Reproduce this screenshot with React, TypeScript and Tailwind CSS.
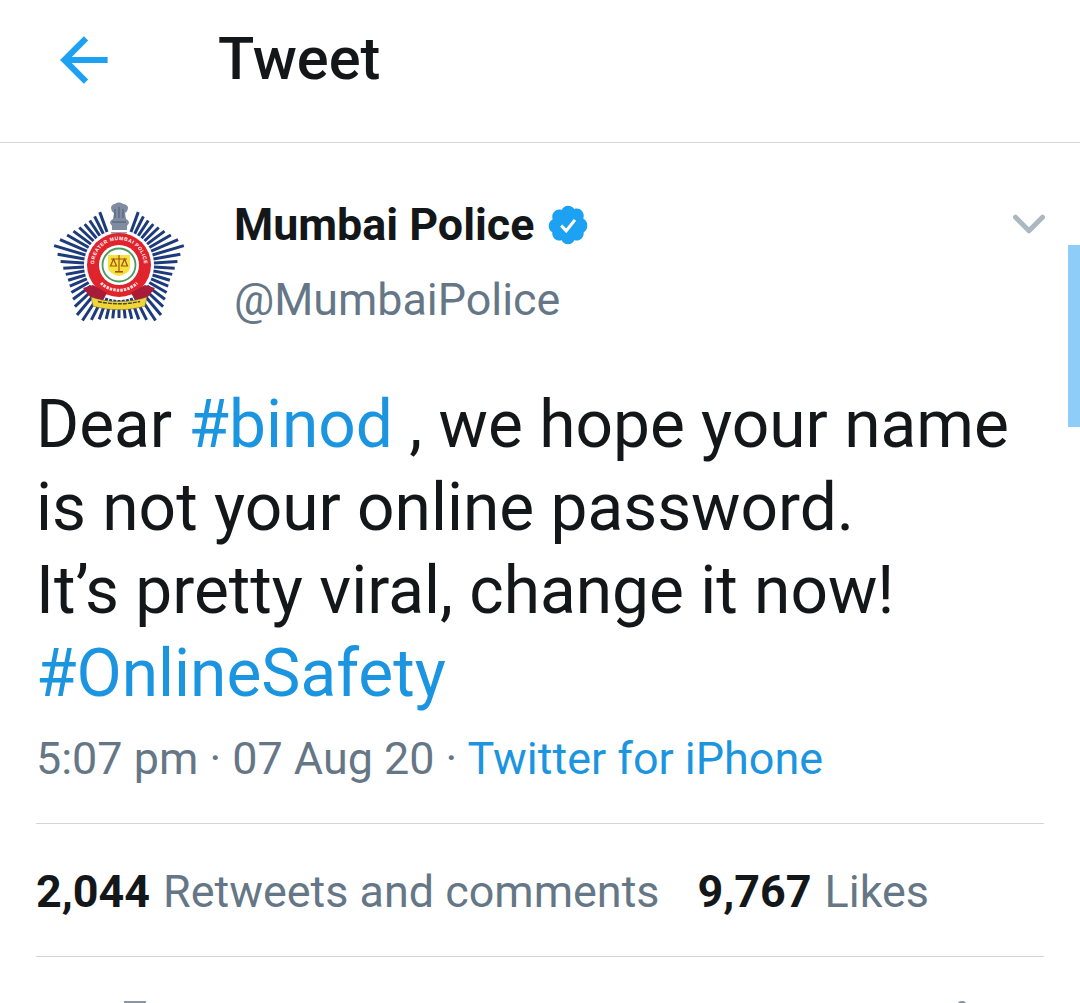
import { ArrowLeft, ChevronDown } from 'lucide-react';

// star outline of the badge, in polar form around the centre
const TIP = 69;
const VALLEY = 53;
const STEP = (2 * Math.PI) / 5;

function rayEnd(angle: number) {
  // angle 0 points straight up, a tip every 72 degrees
  let a = angle % STEP;
  if (a > STEP / 2) a = STEP - a;
  const half = STEP / 2;
  const x2 = VALLEY * Math.cos(half);
  const y2 = VALLEY * Math.sin(half);
  const dx = x2 - TIP;
  const dy = y2;
  return (TIP * dy) / (Math.cos(a) * dy - Math.sin(a) * dx);
}

const rays = Array.from({ length: 54 }, (_, i) => {
  const angle = (i / 54) * 2 * Math.PI;
  const outer = rayEnd(angle);
  const inner = 35;
  return {
    x1: 70 + Math.sin(angle) * inner,
    y1: 70 - Math.cos(angle) * inner,
    x2: 70 + Math.sin(angle) * outer,
    y2: 70 - Math.cos(angle) * outer,
    top: i < 3 || i > 51,
  };
});

function PoliceBadge() {
  return (
    <svg viewBox="0 0 140 138" className="w-[140px] h-[138px] shrink-0">
      {rays
        .filter((r) => !r.top)
        .map((r, i) => (
          <line key={i} x1={r.x1} y1={r.y1} x2={r.x2} y2={r.y2} stroke="#1c3a7c" strokeWidth="3" />
        ))}
      {/* national emblem on top */}
      <path
        d="M66 9c2-2 6-2 8 0 2 0 4 1 5 3 0 3-1 5-3 6l1 6c2 1 3 2 3 4l-2 3v4H63v-4l-2-3c0-2 1-3 3-4l1-6c-2-1-3-3-3-6 1-2 2-3 4-3z"
        fill="#7f8ba0"
      />
      <path d="M63 27h14M66 14v9M70 12v11M74 14v9" stroke="#4f5a70" strokeWidth="1" />
      <rect x="62" y="37" width="16" height="1.500" fill="#9aa3b0" />
      {/* ring */}
      <circle cx="70" cy="70" r="32" fill="#e0242e" />
      <circle cx="70" cy="70" r="20" fill="#fff" />
      <circle cx="70" cy="70" r="16.500" fill="none" stroke="#4a9a5c" strokeWidth="1.800" />
      <path d="M59 60h22v12c0 5-6 8-11 9-5-1-11-4-11-9z" fill="#f5e23a" />
      {/* scales */}
      <path d="M70 60v16M62 64h16M64.500 64l-3 7h6zM75.500 64l-3 7h6z" stroke="#a3501d" strokeWidth="1.200" fill="none" />
      <rect x="66" y="76" width="8" height="1.600" fill="#a3501d" />
      <defs>
        <path id="ringTop" d="M48.350 82.500A25 25 0 1 1 91.650 82.500" />
      </defs>
      <text className="font-['Liberation_Sans',sans-serif] font-bold" fontSize="5" fill="#fff" letterSpacing="0.5" textAnchor="middle">
        <textPath href="#ringTop" startOffset="50%">GREATER MUMBAI POLICE</textPath>
      </text>
      {/* lower ring lettering, too small to read */}
      <path d="M52 88a26 26 0 0 0 36 0" stroke="#fbdcd6" strokeWidth="3" strokeDasharray="2.500 1" fill="none" />
      {/* banner */}
      <path d="M34 93l10-3 14 8-4 7-12-2z" fill="#a81c3a" />
      <path d="M106 93l-10-3-14 8 4 7 12-2z" fill="#a81c3a" />
      <path d="M42 102c17 6 39 6 56 0l-2 9c-16 5-36 5-52 0z" fill="#f0d53a" stroke="#6e5a1a" strokeWidth="0.500" />
      <path d="M49 106.500c13 3 29 3 42 0" stroke="#4d4a22" strokeWidth="1.400" strokeDasharray="4 1" fill="none" />
    </svg>
  );
}

function VerifiedBadge() {
  return (
    <svg viewBox="0 0 24 24" className="w-[44px] h-[44px] shrink-0">
      <path
        fill="#1da1f2"
        d="M22.500 12c0-1.580-.875-2.950-2.148-3.600.154-.435.238-.905.238-1.400 0-2.210-1.710-3.998-3.818-3.998-.470 0-.920.084-1.336.250C14.818 2.415 13.510 1.500 12 1.500s-2.816.917-3.437 2.250c-.415-.165-.866-.250-1.336-.250-2.110 0-3.818 1.790-3.818 4 0 .494.083.964.237 1.400-1.272.650-2.147 2.018-2.147 3.600 0 1.495.782 2.798 1.942 3.486-.020.170-.032.340-.032.514 0 2.210 1.708 4 3.818 4 .470 0 .920-.086 1.335-.250.620 1.334 1.926 2.250 3.437 2.250 1.512 0 2.818-.916 3.437-2.250.415.163.865.248 1.336.248 2.110 0 3.818-1.790 3.818-4 0-.174-.012-.344-.033-.513 1.158-.687 1.943-1.990 1.943-3.484z"
      />
      <path d="M8.300 12.300l2.700 2.900 4.800-6" stroke="#fff" strokeWidth="1.700" fill="none" />
    </svg>
  );
}

export default function App() {
  return (
    <div className="relative h-[1003px] w-[1080px] overflow-hidden bg-white font-['Roboto',sans-serif] text-[#14171a]">
      {/* Header */}
      <div className="flex h-[143px] items-center border-b border-[#d3d6d8] pb-[22px]">
        <ArrowLeft className="ml-[49px] h-[74px] w-[74px] text-[#1da1f2]" strokeWidth={2} strokeLinecap="butt" strokeLinejoin="miter" />
        <h1 className="ml-[95px] text-[59.500px] font-medium leading-none">Tweet</h1>
      </div>

      {/* Author */}
      <div className="flex pl-[49px] pr-[36px] pt-[52px]">
        <PoliceBadge />
        <div className="ml-[45px] flex-1">
          <div className="flex items-center">
            <span className="text-[44.800px] font-bold leading-[60px]">Mumbai Police</span>
            <span className="ml-[12px]"><VerifiedBadge /></span>
          </div>
          <div className="mt-[15px] text-[44.800px] leading-[60px] text-[#657786]">@MumbaiPolice</div>
        </div>
        <ChevronDown className="-mr-[12px] mt-[2px] h-[54px] w-[54px] text-[#aab8c2]" strokeWidth={2.200} />
      </div>

      {/* Tweet text */}
      <div className="mt-[50px] px-[36px] text-[65.800px] leading-[83px]">
        <div>Dear <span className="text-[#1b95e0]">#binod</span> , we hope your name</div>
        <div>is not your online password.</div>
        <div>It’s pretty viral, change it now!</div>
        <div className="text-[#1b95e0]">#OnlineSafety</div>
      </div>

      {/* Meta */}
      <div className="mt-[14px] px-[36px] text-[44.900px] leading-[60px] text-[#657786]">
        5:07 pm · 07 Aug 20 · <span className="text-[#1b95e0]">Twitter for iPhone</span>
      </div>

      {/* Stats */}
      <div className="mx-[36px] mt-[34px] flex h-[134px] items-center border-y border-[#d3d6d8] pt-[4px] text-[44.900px] text-[#657786]">
        <span className="font-bold text-[#14171a]">2,044</span>
        <span className="ml-[13px]">Retweets and comments</span>
        <span className="ml-[38px] font-bold text-[#14171a]">9,767</span>
        <span className="ml-[13px]">Likes</span>
      </div>

      {/* Action icons, only their tops show */}
      <div className="mt-[44px] ml-[124px] flex">
        <div className="h-[3px] w-[22px] bg-[#8a96a0]" />
        <div className="ml-[812px] h-[3px] w-[8px] rounded-t-full bg-[#8a96a0]" />
      </div>

      {/* Scroll thumb */}
      <div className="absolute right-0 top-[245px] h-[182px] w-[12px] bg-[#8ecdf7]" />
    </div>
  );
}
